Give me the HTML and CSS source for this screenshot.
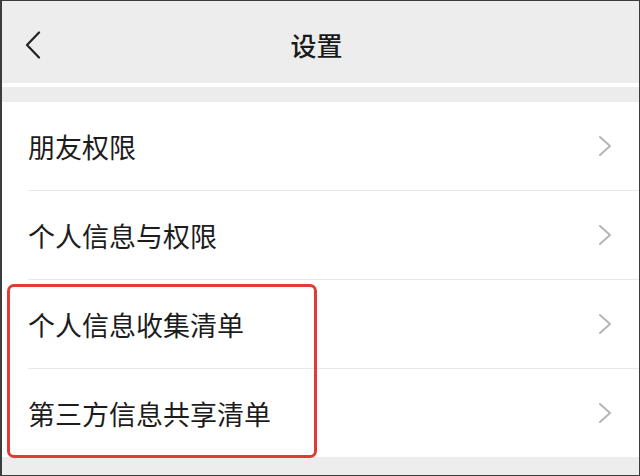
FILE: index.html
```html
<!DOCTYPE html>
<html lang="zh-CN">
<head>
<meta charset="utf-8">
<title>设置</title>
<link rel="stylesheet" href="styles.css">
</head>
<body>
<div class="frame">
  <header class="navbar">
    <div class="nav-left">
      <svg class="back" width="16" height="28" viewBox="0 0 16 28"><polyline points="14,1.5 2,14 14,26.5" fill="none" stroke="#222" stroke-width="2.2" stroke-linecap="round" stroke-linejoin="round"/></svg>
    </div>
    <div class="title">设置</div>
    <div class="nav-right"></div>
  </header>
  <div class="band"></div>
  <div class="list">
    <div class="row"><div class="row-inner"><span class="label">朋友权限</span><svg class="chev" width="14" height="22" viewBox="0 0 14 22"><polyline points="2,2 12,11 2,20" fill="none" stroke="#b5b5b5" stroke-width="2" stroke-linecap="round" stroke-linejoin="round"/></svg></div></div>
    <div class="row"><div class="row-inner"><span class="label">个人信息与权限</span><svg class="chev" width="14" height="22" viewBox="0 0 14 22"><polyline points="2,2 12,11 2,20" fill="none" stroke="#b5b5b5" stroke-width="2" stroke-linecap="round" stroke-linejoin="round"/></svg></div></div>
    <div class="highlight">
      <div class="row"><div class="row-inner"><span class="label">个人信息收集清单</span><svg class="chev" width="14" height="22" viewBox="0 0 14 22"><polyline points="2,2 12,11 2,20" fill="none" stroke="#b5b5b5" stroke-width="2" stroke-linecap="round" stroke-linejoin="round"/></svg></div></div>
      <div class="row last"><div class="row-inner"><span class="label">第三方信息共享清单</span><svg class="chev" width="14" height="22" viewBox="0 0 14 22"><polyline points="2,2 12,11 2,20" fill="none" stroke="#b5b5b5" stroke-width="2" stroke-linecap="round" stroke-linejoin="round"/></svg></div></div>
    </div>
  </div>
</div>
</body>
</html>
```
FILE: styles.css
```css
html, body {
  margin: 0;
  padding: 0;
  background: #ededed;
}
body {
  font-family: "Noto Sans CJK SC", "Noto Sans", sans-serif;
  color: #1a1a1a;
}
.frame {
  box-sizing: border-box;
  width: 640px;
  height: 476px;
  border: 1px solid #3c3c3c;
  border-left-width: 2px;
  background: #ededed;
  overflow: hidden;
}
.navbar {
  height: 82px;
  box-sizing: border-box;
  padding: 6px 31px 0 23px;
  display: grid;
  grid-template-columns: 1fr auto 1fr;
  align-items: center;
  background: #ededed;
}
.back {
  display: block;
}
.title {
  font-size: 26px;
  font-weight: 500;
  line-height: 1;
  color: #1a1a1a;
}
.band {
  border-top: 4px solid #ffffff;
  height: 15px;
  background: #ececec;
}
.list {
  background: #ffffff;
}
.row {
  padding-left: 26px;
}
.row-inner {
  height: 88px;
  border-bottom: 1px solid #e8e8e8;
  display: flex;
  align-items: center;
  justify-content: space-between;
  padding-right: 27px;
}
.row.last .row-inner {
  border-bottom: none;
}
.label {
  font-size: 27px;
  line-height: 1;
  color: #1c1c1c;
}
.chev {
  display: block;
}
.highlight {
  position: relative;
}
.highlight::after {
  content: "";
  position: absolute;
  left: 5px;
  top: 4px;
  width: 310px;
  bottom: -1px;
  box-sizing: border-box;
  border: 3.5px solid #e03c35;
  border-radius: 7px;
  pointer-events: none;
}
```
